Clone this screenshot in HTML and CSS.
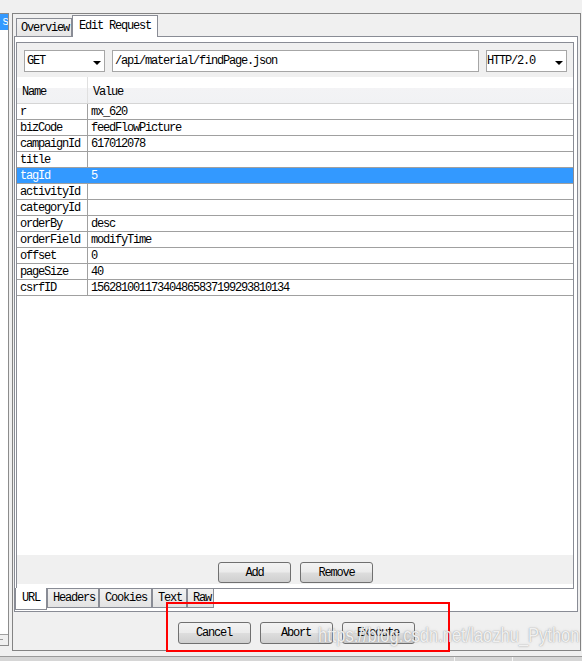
FILE: index.html
```html
<!DOCTYPE html>
<html>
<head>
<meta charset="utf-8">
<link rel="stylesheet" href="styles.css">
</head>
<body>
<div class="screen">
  <div class="main">
    <div class="side">
      <div class="side-sel"><span>s</span></div>
      <div class="side-fill"></div>
      <div class="side-scroll"><span class="dash"></span></div>
    </div>
    <div class="frame">
      <div class="tabs">
        <div class="tab">Overview</div>
        <div class="tab tab-active">Edit Request</div>
      </div>
      <div class="panel">
        <div class="subctl">
          <div class="page-box">
            <div class="page">
              <div class="reqline">
                <div class="combo combo-method"><span>GET</span><i class="arrow"></i></div>
                <div class="input-url">/api/material/findPage.json</div>
                <div class="combo combo-proto"><span>HTTP/2.0</span><i class="arrow"></i></div>
              </div>
              <div class="grid">
                <div class="grid-head">
                  <div class="hcell hname">Name</div>
                  <div class="hcell">Value</div>
                </div>
                <div class="row"><div class="cname">r</div><div class="cval">mx_620</div></div>
                <div class="row"><div class="cname">bizCode</div><div class="cval">feedFlowPicture</div></div>
                <div class="row"><div class="cname">campaignId</div><div class="cval">617012078</div></div>
                <div class="row"><div class="cname">title</div><div class="cval"></div></div>
                <div class="row row-sel"><div class="cname">tagId</div><div class="cval">5</div></div>
                <div class="row"><div class="cname">activityId</div><div class="cval"></div></div>
                <div class="row"><div class="cname">categoryId</div><div class="cval"></div></div>
                <div class="row"><div class="cname">orderBy</div><div class="cval">desc</div></div>
                <div class="row"><div class="cname">orderField</div><div class="cval">modifyTime</div></div>
                <div class="row"><div class="cname">offset</div><div class="cval">0</div></div>
                <div class="row"><div class="cname">pageSize</div><div class="cval">40</div></div>
                <div class="row"><div class="cname">csrfID</div><div class="cval">156281001173404865837199293810134</div></div>
              </div>
              <div class="grid-btns">
                <div class="btn">Add</div>
                <div class="btn">Remove</div>
              </div>
            </div>
          </div>
          <div class="subtabs">
            <div class="stab stab-active">URL</div>
            <div class="stab w-headers">Headers</div>
            <div class="stab w-cookies">Cookies</div>
            <div class="stab w-text">Text</div>
            <div class="stab w-raw">Raw</div>
          </div>
        </div>
      </div>
      <div class="actions">
        <div class="btn">Cancel</div>
        <div class="btn">Abort</div>
        <div class="btn">Execute</div>
      </div>
    </div>
  </div>
  <div class="status">
    <div class="status-seg seg-a"></div>
    <div class="status-seg seg-b"></div>
    <div class="status-seg seg-c"></div>
  </div>
  <div class="redbox"></div>
  <div class="watermark">https://blog.csdn.net/laozhu_Python</div>
</div>
</body>
</html>
```

FILE: styles.css
```css
* { box-sizing: border-box; }
html, body { margin: 0; padding: 0; }
body {
  background: #f0f0f0;
  font-family: "Liberation Mono", "DejaVu Sans Mono", monospace;
  font-size: 12px;
  letter-spacing: -1.2px;
  color: #000;
}
.screen {
  position: relative;
  width: 582px;
  height: 661px;
  overflow: hidden;
  background: #f0f0f0;
}
.main {
  display: flex;
  align-items: flex-start;
  padding-top: 13px;
}
.side {
  width: 9px;
  height: 633px;
  border-top: 1px solid #8c8c8c;
  border-right: 1px solid #8c8c8c;
  border-bottom: 1px solid #8c8c8c;
  display: flex;
  flex-direction: column;
  background: #fff;
}
.side-sel {
  height: 16px;
  background: #3399ff;
  color: #fff;
  overflow: hidden;
  display: flex;
  justify-content: flex-end;
  line-height: 17px;
  white-space: nowrap;
}
.side-fill { flex: 1; }
.side-scroll {
  height: 11px;
  border-top: 1px solid #a0a0a0;
  background: #f0f0f0;
}
.dash {
  display: block;
  width: 3px;
  height: 1px;
  background: #9a9a9a;
  margin-top: 4px;
}
.frame {
  margin-left: 3px;
  width: 569px;
  height: 638px;
  border: 1px solid #838383;
  padding: 0 2px 0 1px;
  display: flex;
  flex-direction: column;
  background: #f0f0f0;
}
.tabs {
  height: 22px;
  display: flex;
  align-items: flex-end;
  padding-left: 2px;
  position: relative;
  z-index: 2;
}
.tab {
  height: 18px;
  width: 56px;
  border: 1px solid #898c95;
  border-bottom: none;
  background: linear-gradient(#f3f3f3, #e6e6e6);
  padding-left: 4px;
  line-height: 19px;
  white-space: nowrap;
}
.tab-active {
  width: 86px;
  height: 22px;
  margin-bottom: -1px;
  background: #fff;
  padding-left: 6px;
  line-height: 20px;
}
.panel {
  height: 576px;
  border: 1px solid #898c95;
  background: #fff;
  padding: 5px 3px 0 1px;
}
.subctl {
  display: flex;
  flex-direction: column;
}
.page-box {
  height: 547px;
  border: 1px solid #898c95;
  background: #fff;
}
.page {
  height: 541px;
  background: #f0f0f0;
  display: flex;
  flex-direction: column;
}
.reqline {
  display: flex;
  gap: 7px;
  padding: 7px 0 0 7px;
  height: 29px;
}
.combo, .input-url {
  height: 22px;
  border: 1px solid #a6a6a6;
  background: #fff;
  line-height: 20px;
  white-space: nowrap;
  position: relative;
}
.combo { width: 81px; }
.combo-method span { padding-left: 2px; }
.input-url { width: 367px; padding-left: 2px; }
.arrow {
  position: absolute;
  right: 3px;
  top: 10px;
  width: 0;
  height: 0;
  border-left: 4px solid transparent;
  border-right: 4px solid transparent;
  border-top: 4px solid #000;
}
.grid {
  margin-top: 5px;
  height: 478px;
  width: 556px;
  background: #fff;
}
.grid-head {
  display: flex;
  height: 27px;
  border-bottom: 1px solid #d5d5d5;
  background: linear-gradient(#ffffff 0, #ffffff 42%, #f3f3f5 42%, #f1f2f4 100%);
}
.hcell {
  line-height: 30px;
  padding-left: 5px;
  flex: 1;
}
.hcell.hname {
  flex: 0 0 71px;
  border-right: 1px solid #e0e0e0;
}
.row {
  display: flex;
  height: 16px;
  border-bottom: 1px solid #a0a0a0;
  line-height: 17px;
  white-space: nowrap;
}
.cname {
  flex: 0 0 71px;
  border-right: 1px solid #a0a0a0;
  padding-left: 3px;
}
.cval { flex: 1; padding-left: 3px; }
.row-sel { background: #3399ff; color: #fff; }
.row-sel .cname { border-right-color: #3399ff; }
.grid-btns {
  display: flex;
  justify-content: center;
  gap: 9px;
  margin-top: 7px;
  padding-left: 1px;
}
.btn {
  width: 73px;
  height: 21px;
  border: 1px solid #707070;
  border-radius: 3px;
  background: linear-gradient(#f3f3f3 0%, #ebebeb 48%, #dddddd 52%, #cfcfcf 100%);
  text-align: center;
  line-height: 20px;
  white-space: nowrap;
}
.subtabs {
  display: flex;
  align-items: flex-start;
  margin-left: -1px;
}
.stab {
  height: 19px;
  border: 1px solid #898c95;
  border-top: none;
  background: linear-gradient(#f2f2f2, #e3e3e3);
  line-height: 19px;
  padding-left: 5px;
  white-space: nowrap;
}
.stab-active {
  width: 32px;
  height: 22px;
  margin-top: -1px;
  background: #fff;
  padding-left: 6px;
  line-height: 21px;
  position: relative;
  z-index: 1;
}
.w-headers { width: 52px; }
.w-cookies { width: 53px; }
.w-text { width: 35px; }
.w-raw { width: 27px; }
.actions {
  display: flex;
  justify-content: center;
  gap: 9px;
  padding-top: 10px;
}
.actions .btn { height: 22px; line-height: 21px; }
.status {
  margin-top: 5px;
  height: 6px;
  border-top: 1px solid #9a9a9a;
  background: #d6d6d6;
  display: flex;
}
.status-seg { height: 100%; }
.seg-a { width: 455px; border-right: 1px solid #f4f4f4; }
.seg-b { width: 58px; border-right: 1px solid #f4f4f4; }
.seg-c { flex: 1; }
.redbox {
  position: absolute;
  left: 166px;
  top: 602px;
  width: 284px;
  height: 50px;
  border: 2px solid #ff0000;
}
.watermark {
  position: absolute;
  left: 318px;
  top: 624px;
  font-family: "Liberation Sans", Arial, sans-serif;
  font-size: 16.5px;
  letter-spacing: 0;
  color: rgba(255, 255, 255, 0.85);
  text-shadow: 0 0 1px rgba(130, 130, 130, 0.7), 0 0 2px rgba(150, 150, 150, 0.5);
  white-space: nowrap;
  transform: scaleY(1.2);
  transform-origin: left top;
}
```
